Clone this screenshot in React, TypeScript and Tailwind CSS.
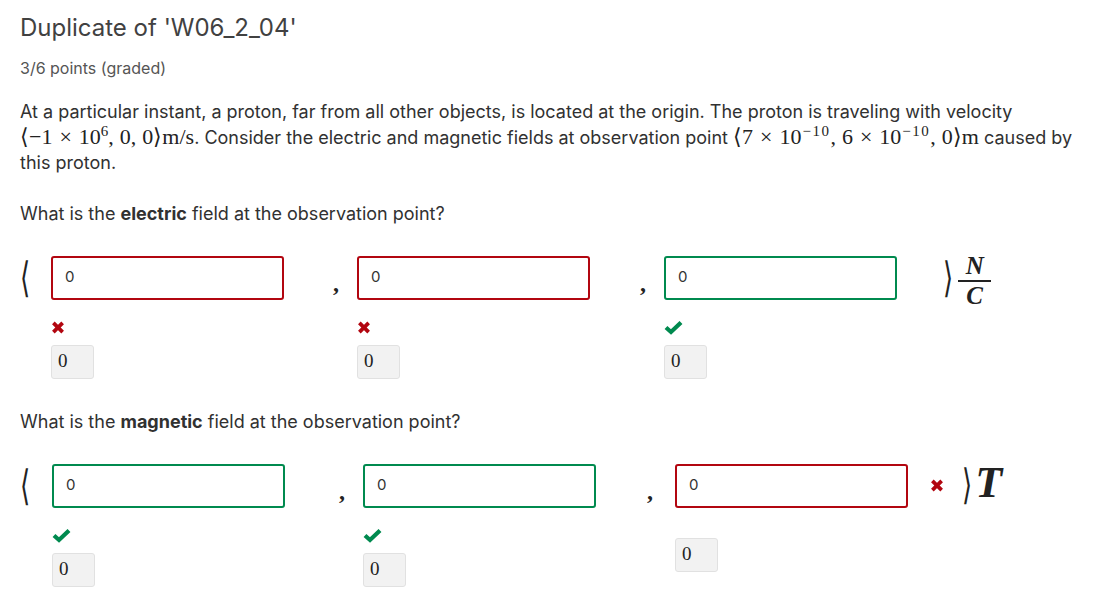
import React from "react"

type Status = "correct" | "incorrect"

const RED = "#b20610"
const GREEN = "#008a4f"

function Cross({ className = "" }: { className?: string }) {
    return (
        <svg viewBox="0 0 14 14" className={className} fill="none" stroke={RED} strokeWidth={4} strokeLinecap="butt">
            <path d="M2 2 L12 12 M12 2 L2 12" />
        </svg>
    )
}

function Check({ className = "" }: { className?: string }) {
    return (
        <svg viewBox="0 0 18 14" className={className} fill="none" stroke={GREEN} strokeWidth={4.2} strokeLinejoin="miter">
            <path d="M1.5 6.5 L6.5 11 L16.5 1.5" />
        </svg>
    )
}

function Answer({ status, icon = true }: { status: Status; icon?: boolean }) {
    return (
        <div className="flex flex-col items-start">
            <div
                className={
                    "w-[233px] h-[44px] rounded-[3px] border-2 flex items-center px-3 text-[15px] text-[#333] " +
                    (status === "correct" ? "border-[#008a4f]" : "border-[#b20610]")
                }
            >
                0
            </div>
            {icon ? (
                <div className="h-[45px] pt-[21px]">
                    {status === "correct" ? (
                        <Check className="w-[19px] h-[14px]" />
                    ) : (
                        <Cross className="w-[14px] h-[13px]" />
                    )}
                </div>
            ) : (
                <div className="h-[30px]" />
            )}
            <div className="w-[43px] h-[34px] rounded-[3px] border border-[#e1e1e1] bg-[#f2f2f2] flex items-center px-[6px] font-['Liberation_Serif',serif] text-[19px] text-[#222]">
                0
            </div>
        </div>
    )
}

function Comma({ w, pl }: { w: string; pl: string }) {
    return (
        <div className={w + " " + pl + " h-[44px] flex items-center font-['Liberation_Serif',serif] font-bold text-[24px] text-[#222] pt-[10px]"}>
            ,
        </div>
    )
}

function Bracket({ open }: { open: boolean }) {
    return (
        <span className="inline-block font-['DejaVu_Serif',serif] text-[26px] leading-none text-[#222] scale-y-[1.6]">
            {open ? "⟨" : "⟩"}
        </span>
    )
}

const m = "font-['Liberation_Serif',serif] text-[22px] text-[#222] leading-none whitespace-nowrap"
const sup = "text-[15px]"
const supWide = "text-[15px] ml-[1px] tracking-[1.5px]"

function Times() {
    return <span className="mx-[7px]">×</span>
}

function C() {
    return <span className="mr-[6px]">,</span>
}

export default function App() {
    return (
        <div className="min-h-screen bg-white px-5 pt-[13px] font-['Inter',sans-serif] text-[#313131]">
            <h2 className="text-[24px] leading-[30px] text-[#414141]">Duplicate of 'W06_2_04'</h2>
            <p className="mt-[13px] text-[16px] leading-[24px] text-[#555]">3/6 points (graded)</p>

            <p className="mt-[19px] text-[18px] leading-[25.5px]">
                At a particular instant, a proton, far from all other objects, is located at the origin. The proton is traveling with velocity{" "}
                <span className={m}>
                    ⟨−1<Times />10<sup className={sup}>6</sup><C />0<C />0⟩m/s
                </span>
                . Consider the electric and magnetic fields at observation point{" "}
                <span className={m}>
                    ⟨7<Times />10<sup className={supWide}>−10</sup><C />6<Times />10<sup className={supWide}>−10</sup><C />0⟩m
                </span>{" "}
                caused by this proton.
            </p>

            <p className="mt-[25px] text-[18px] leading-[26px]">
                What is the <b className="font-bold">electric</b> field at the observation point?
            </p>

            {/* electric field row */}
            <div className="mt-[29px] flex items-start">
                <div className="w-[31px] h-[44px] flex items-center">
                    <Bracket open />
                </div>
                <Answer status="incorrect" />
                <Comma w="w-[73px]" pl="pl-[49px]" />
                <Answer status="incorrect" />
                <Comma w="w-[74px]" pl="pl-[50px]" />
                <Answer status="correct" />
                <div className="ml-[46px] h-[44px] flex items-center gap-[5px]">
                    <Bracket open={false} />
                    <div className="flex flex-col items-center font-['Liberation_Serif',serif] italic font-bold text-[25px] leading-[22px] text-[#222] mt-[6px]">
                        <span>N</span>
                        <span className="w-[33px] h-[2px] bg-[#222] my-[3px]" />
                        <span>C</span>
                    </div>
                </div>
            </div>

            <p className="mt-[30px] text-[18px] leading-[26px]">
                What is the <b className="font-bold">magnetic</b> field at the observation point?
            </p>

            {/* magnetic field row */}
            <div className="mt-[29px] flex items-start">
                <div className="w-[32px] h-[44px] flex items-center">
                    <Bracket open />
                </div>
                <Answer status="correct" />
                <Comma w="w-[78px]" pl="pl-[54px]" />
                <Answer status="correct" />
                <Comma w="w-[79px]" pl="pl-[51px]" />
                <Answer status="incorrect" icon={false} />
                <div className="ml-[22px] h-[44px] flex items-center">
                    <Cross className="w-[14px] h-[13px]" />
                    <span className="ml-[18px]">
                        <Bracket open={false} />
                    </span>
                    <span className="ml-[3px] font-['Liberation_Serif',serif] italic font-bold text-[44px] leading-none text-[#222] -mt-[6px]">T</span>
                </div>
            </div>
        </div>
    )
}
